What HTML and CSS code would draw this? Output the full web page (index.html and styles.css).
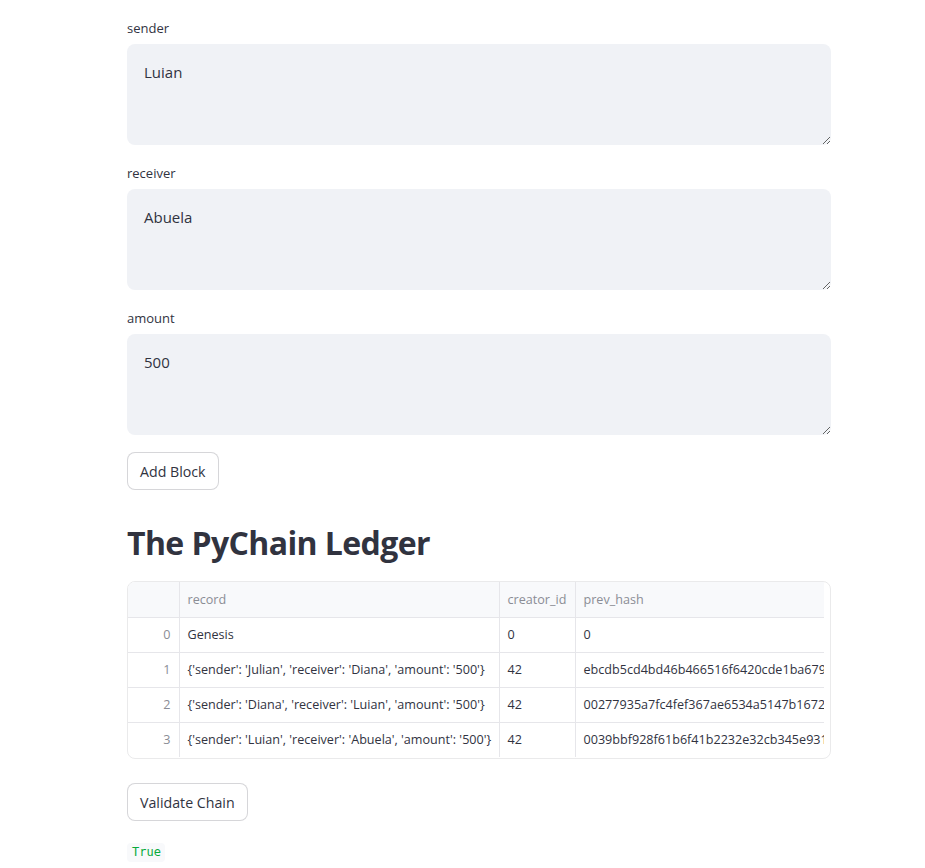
FILE: index.html
```html
<!DOCTYPE html>
<html>
<head>
<meta charset="utf-8">
<link rel="stylesheet" href="styles.css">
</head>
<body>
<main class="main">
  <div class="field">
    <label class="label">sender</label>
    <textarea class="area">Luian</textarea>
  </div>
  <div class="field">
    <label class="label">receiver</label>
    <textarea class="area">Abuela</textarea>
  </div>
  <div class="field">
    <label class="label">amount</label>
    <textarea class="area">500</textarea>
  </div>
  <div class="btnrow"><button class="btn">Add Block</button></div>
  <h2 class="title">The PyChain Ledger</h2>
  <div class="grid">
    <div class="clip">
      <table class="tbl">
        <colgroup>
          <col class="c-idx"><col class="c-rec"><col class="c-cr"><col class="c-hash">
        </colgroup>
        <thead>
          <tr><th class="idx"></th><th>record</th><th>creator_id</th><th>prev_hash</th></tr>
        </thead>
        <tbody>
          <tr><td class="idx">0</td><td>Genesis</td><td>0</td><td>0</td></tr>
          <tr><td class="idx">1</td><td>{'sender': 'Julian', 'receiver': 'Diana', 'amount': '500'}</td><td>42</td><td>ebcdb5cd4bd46b466516f6420cde1ba6791</td></tr>
          <tr><td class="idx">2</td><td>{'sender': 'Diana', 'receiver': 'Luian', 'amount': '500'}</td><td>42</td><td>00277935a7fc4fef367ae6534a5147b1672b</td></tr>
          <tr><td class="idx">3</td><td>{'sender': 'Luian', 'receiver': 'Abuela', 'amount': '500'}</td><td>42</td><td>0039bbf928f61b6f41b2232e32cb345e9312</td></tr>
        </tbody>
      </table>
    </div>
  </div>
  <div class="btnrow2"><button class="btn">Validate Chain</button></div>
  <div class="out"><code class="code">True</code></div>
</main>
</body>
</html>
```
FILE: styles.css
```css
html, body { margin: 0; padding: 0; background: #fff; }
body {
  font-family: "Source Sans Pro", "Open Sans", "Noto Sans", sans-serif;
  color: #31333f;
}
.main {
  width: 704px;
  padding: 17px 0 0 127px;
}
.field { display: flex; flex-direction: column; margin-bottom: 17px; }
.label {
  font-size: 13px;
  line-height: 22px;
  height: 22px;
  margin-bottom: 5px;
  color: #31333f;
}
.area {
  box-sizing: border-box;
  width: 704px;
  height: 101px;
  border: none;
  border-radius: 8px;
  background: #f0f2f6;
  padding: 16px 16px 16px 17px;
  font-family: inherit;
  font-size: 15px;
  line-height: 25.6px;
  color: #31333f;
  resize: vertical;
  outline: none;
  margin: 0;
}
.btnrow { height: 38px; }
.btn {
  box-sizing: border-box;
  height: 38px;
  padding: 0 12px;
  border: 1px solid rgba(49,51,63,0.2);
  border-radius: 8px;
  background: #fff;
  font-family: inherit;
  font-size: 14.2px;
  color: #31333f;
  margin: 0;
}
.title {
  margin: 0;
  padding: 32px 0 17px;
  font-size: 32px;
  line-height: 42px;
  font-weight: 700;
  color: #31333f;
  letter-spacing: -0.6px;
}
.grid {
  box-sizing: border-box;
  width: 704px;
  height: 178px;
  border: 1px solid rgba(49,51,63,0.1);
  border-radius: 8px;
  overflow: hidden;
}
.clip { width: 696px; overflow: hidden; }
.tbl {
  border-collapse: collapse;
  table-layout: fixed;
  width: 900px;
  font-size: 12.6px;
}
.c-idx { width: 51px; }
.c-rec { width: 320px; }
.c-cr { width: 76px; }
.c-hash { width: 453px; }
.tbl th, .tbl td {
  box-sizing: border-box;
  height: 35px;
  padding: 0 8px;
  text-align: left;
  white-space: nowrap;
  overflow: hidden;
  text-overflow: clip;
  border-right: 1px solid #e6e6ea;
  border-bottom: 1px solid #e6e6ea;
  color: #31333f;
  font-weight: 400;
}
.tbl thead th {
  background: #f8f9fb;
  color: #8b8d95;
}
.tbl tbody tr:last-child td { border-bottom: none; }
.tbl td.idx { text-align: right; color: #8b8d95; }
.btnrow2 { padding-top: 24px; height: 38px; }
.out { padding-top: 18px; }
.code {
  display: inline-block;
  font-family: "DejaVu Sans Mono", "Liberation Mono", monospace;
  font-size: 12px;
  line-height: 19px;
  padding: 0 4px 0 5px;
  background: #f8f9fb;
  color: #09ab3b;
  border-radius: 4px;
}
```
